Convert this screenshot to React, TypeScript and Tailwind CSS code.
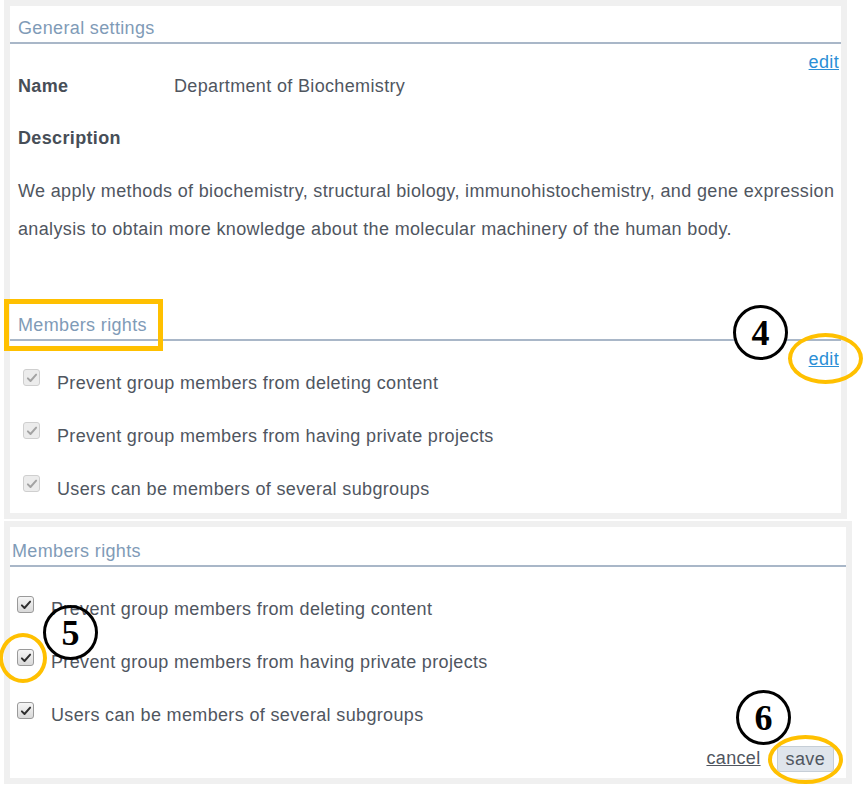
import type { ReactNode } from 'react'

const rights = [
  'Prevent group members from deleting content',
  'Prevent group members from having private projects',
  'Users can be members of several subgroups',
]

function Check({ disabled }: { disabled?: boolean }) {
  return (
    <span
      className={
        disabled
          ? 'flex h-[17px] w-[17px] shrink-0 items-center justify-center rounded-[3px] border border-[#cfcfcf] bg-[#ececec]'
          : 'flex h-[17px] w-[17px] shrink-0 items-center justify-center rounded-[3px] border border-[#9a9a9a] bg-gradient-to-b from-[#f6f6f6] to-[#d9d9d9]'
      }
    >
      <svg viewBox="0 0 16 16" className="h-[12px] w-[12px]">
        <path
          d="M2.5 8.5 L6 12 L13.5 3.5"
          fill="none"
          stroke={disabled ? '#a3a3a3' : '#2f2f2f'}
          strokeWidth="2.6"
          strokeLinecap="round"
          strokeLinejoin="round"
        />
      </svg>
    </span>
  )
}

function SectionTitle({ children, className }: { children: ReactNode; className: string }) {
  return (
    <div className={`border-b-2 border-[#a9b7c8] pb-[2px] text-[18px] leading-6 text-[#7f9bb7] ${className}`}>
      {children}
    </div>
  )
}

function Circled({ n, className }: { n: string; className: string }) {
  return (
    <div
      className={`absolute flex h-[55px] w-[55px] items-center justify-center rounded-full border-[3px] border-black font-['Liberation_Serif',serif] text-[36px] font-bold leading-none tracking-normal text-black ${className}`}
    >
      {n}
    </div>
  )
}

export default function App() {
  return (
    <div className="relative h-[786px] w-[863px] overflow-hidden bg-white font-['Liberation_Sans',Arial,sans-serif] text-[18px] leading-6 tracking-[0.35px] text-[#50565f]">
      {/* first screenshot: read-only view */}
      <div className="ml-1 w-[843px] bg-[#f0f0f0] p-[6px]">
        <div className="h-[507px] bg-white">
          <SectionTitle className="pl-2 pt-[10px]">General settings</SectionTitle>
          <div className="mt-[6px] pr-[2px] text-right">
            <a href="#" className="text-[#2b8fd6] underline">edit</a>
          </div>
          <div className="flex pl-2">
            <span className="w-[156px] font-bold text-[#474e57]">Name</span>
            <span>Department of Biochemistry</span>
          </div>
          <div className="mt-[28px] pl-2 font-bold text-[#474e57]">Description</div>
          <p className="mt-[22px] pl-2 leading-[38px]">
            We apply methods of biochemistry, structural biology, immunohistochemistry, and gene expression
            <br />
            analysis to obtain more knowledge about the molecular machinery of the human body.
          </p>
          <SectionTitle className="mt-[65px] pl-2">Members rights</SectionTitle>
          <div className="mt-[6px] pr-[2px] text-right">
            <a href="#" className="text-[#2b8fd6] underline">edit</a>
          </div>
          <div className="flex flex-col gap-[29px] pl-[13px]">
            {rights.map((r) => (
              <div key={r} className="flex items-start">
                <span className="-mt-[2px]">
                  <Check disabled />
                </span>
                <span className="ml-[17px]">{r}</span>
              </div>
            ))}
          </div>
        </div>
      </div>

      {/* second screenshot: editing */}
      <div className="ml-1 mt-[2px] w-[848px] bg-[#f0f0f0] p-[6px]">
        <div className="h-[251px] bg-white">
          <SectionTitle className="pl-[2px] pt-[12px] text-[#7c9dc0]">Members rights</SectionTitle>
          <div className="mt-[30px] flex flex-col gap-[29px] pl-[7px]">
            {rights.map((r) => (
              <div key={r} className="flex items-start">
                <span className="-mt-[1px]">
                  <Check />
                </span>
                <span className="ml-[17px]">{r}</span>
              </div>
            ))}
          </div>
          <div className="mt-[19px] flex items-center justify-end gap-4 pr-[12px]">
            <a href="#" className="-mt-[3px] text-[#50565f] underline">cancel</a>
            <button
              type="button"
              className="h-[26px] rounded-[3px] border border-[#c6ced6] bg-[#dfe5ec] px-[8px] leading-6 text-[#50565f]"
            >
              save
            </button>
          </div>
        </div>
      </div>

      {/* annotations */}
      <div className="absolute left-[4px] top-[299px] h-[52px] w-[159px] border-[5px] border-[#ffc000]" />
      <Circled n="4" className="left-[733px] top-[305px] bg-white" />
      <div className="absolute left-[788px] top-[333px] h-[51px] w-[75px] rounded-[50%] border-[4px] border-[#ffc000]" />
      <Circled n="5" className="left-[43px] top-[605px]" />
      <div className="absolute -left-[1px] top-[633px] h-[50px] w-[48px] rounded-[50%] border-[4px] border-[#ffc000]" />
      <Circled n="6" className="left-[736px] top-[690px]" />
      <div className="absolute left-[768px] top-[735px] h-[49px] w-[75px] rounded-[50%] border-[4px] border-[#ffc000]" />
    </div>
  )
}
